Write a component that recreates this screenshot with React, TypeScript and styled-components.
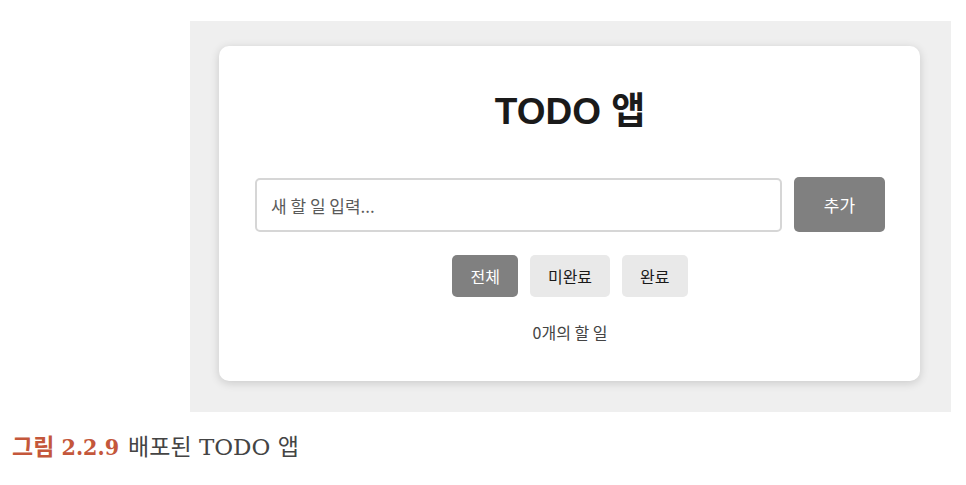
import React from "react";
import styled, { createGlobalStyle } from "styled-components";

const GlobalStyle = createGlobalStyle`
  html, body { margin: 0; padding: 0; background: #ffffff; }
  body { font-family: "Liberation Sans", "Noto Sans CJK KR", sans-serif; }
  * { box-sizing: border-box; }
`;

const Page = styled.div`
  width: 966px;
  height: 485px;
  padding-top: 21px;
  display: flex;
  flex-direction: column;
`;

const Frame = styled.div`
  margin-left: 190px;
  width: 761px;
  height: 391px;
  background: #efefef;
  padding: 25px 31px 31px 29px;
`;

const Card = styled.div`
  width: 701px;
  height: 335px;
  background: #ffffff;
  border-radius: 10px;
  box-shadow: 0 2px 10px rgba(0, 0, 0, 0.16);
  padding: 43px 35px 0 36px;
  display: flex;
  flex-direction: column;
  align-items: center;
`;

const Title = styled.h1`
  margin: 0;
  font-family: "Liberation Sans", "Noto Sans CJK KR", sans-serif;
  font-size: 37px;
  line-height: 46px;
  font-weight: 700;
  color: #1a1a1a;
`;

const InputRow = styled.div`
  margin-top: 42px;
  width: 100%;
  display: flex;
  gap: 12px;
  height: 55px;
`;

const TextInput = styled.input`
  flex: 1;
  height: 54px;
  margin-top: 1px;
  border: 2px solid #d6d6d6;
  border-radius: 5px;
  padding: 0 14px;
  font-family: "Noto Sans CJK KR", sans-serif;
  font-size: 17px;
  color: #222;
  outline: none;
  &::placeholder { color: #5a5a5a; }
`;

const AddButton = styled.button`
  width: 91px;
  height: 55px;
  border: none;
  border-radius: 5px;
  background: #808080;
  color: #ffffff;
  font-family: "Noto Sans CJK KR", sans-serif;
  font-size: 17px;
  cursor: pointer;
`;

const FilterRow = styled.div`
  margin-top: 23px;
  display: flex;
  gap: 12px;
  justify-content: center;
`;

const FilterButton = styled.button<{ $active?: boolean }>`
  height: 42px;
  padding: 0 18px;
  border: none;
  border-radius: 5px;
  background: ${(p) => (p.$active ? "#808080" : "#e9e9e9")};
  color: ${(p) => (p.$active ? "#ffffff" : "#1a1a1a")};
  font-family: "Noto Sans CJK KR", sans-serif;
  font-size: 16px;
  cursor: pointer;
`;

const Count = styled.div`
  margin-top: 24px;
  font-family: "Noto Sans CJK KR", sans-serif;
  font-size: 16px;
  line-height: 22px;
  color: #444444;
`;

const Caption = styled.div`
  margin-top: 20px;
  margin-left: 12px;
  font-family: "DejaVu Serif", "Noto Sans CJK KR", serif;
  font-size: 23px;
  line-height: 30px;
  color: #444444;
  display: flex;
  gap: 9px;
`;

const CaptionLabel = styled.span`
  color: #c4573b;
  font-family: "DejaVu Serif Condensed", "DejaVu Serif", "Noto Sans CJK KR", serif;
  font-stretch: condensed;
  font-weight: 700;
`;

export default function App() {
  return (
    <>
      <GlobalStyle />
      <Page>
        <Frame>
          <Card>
            <Title>TODO 앱</Title>
            <InputRow>
              <TextInput placeholder="새 할 일 입력..." />
              <AddButton>추가</AddButton>
            </InputRow>
            <FilterRow>
              <FilterButton $active>전체</FilterButton>
              <FilterButton>미완료</FilterButton>
              <FilterButton>완료</FilterButton>
            </FilterRow>
            <Count>0개의 할 일</Count>
          </Card>
        </Frame>
        <Caption>
          <CaptionLabel>그림 2.2.9</CaptionLabel>
          <span>배포된 TODO 앱</span>
        </Caption>
      </Page>
    </>
  );
}
